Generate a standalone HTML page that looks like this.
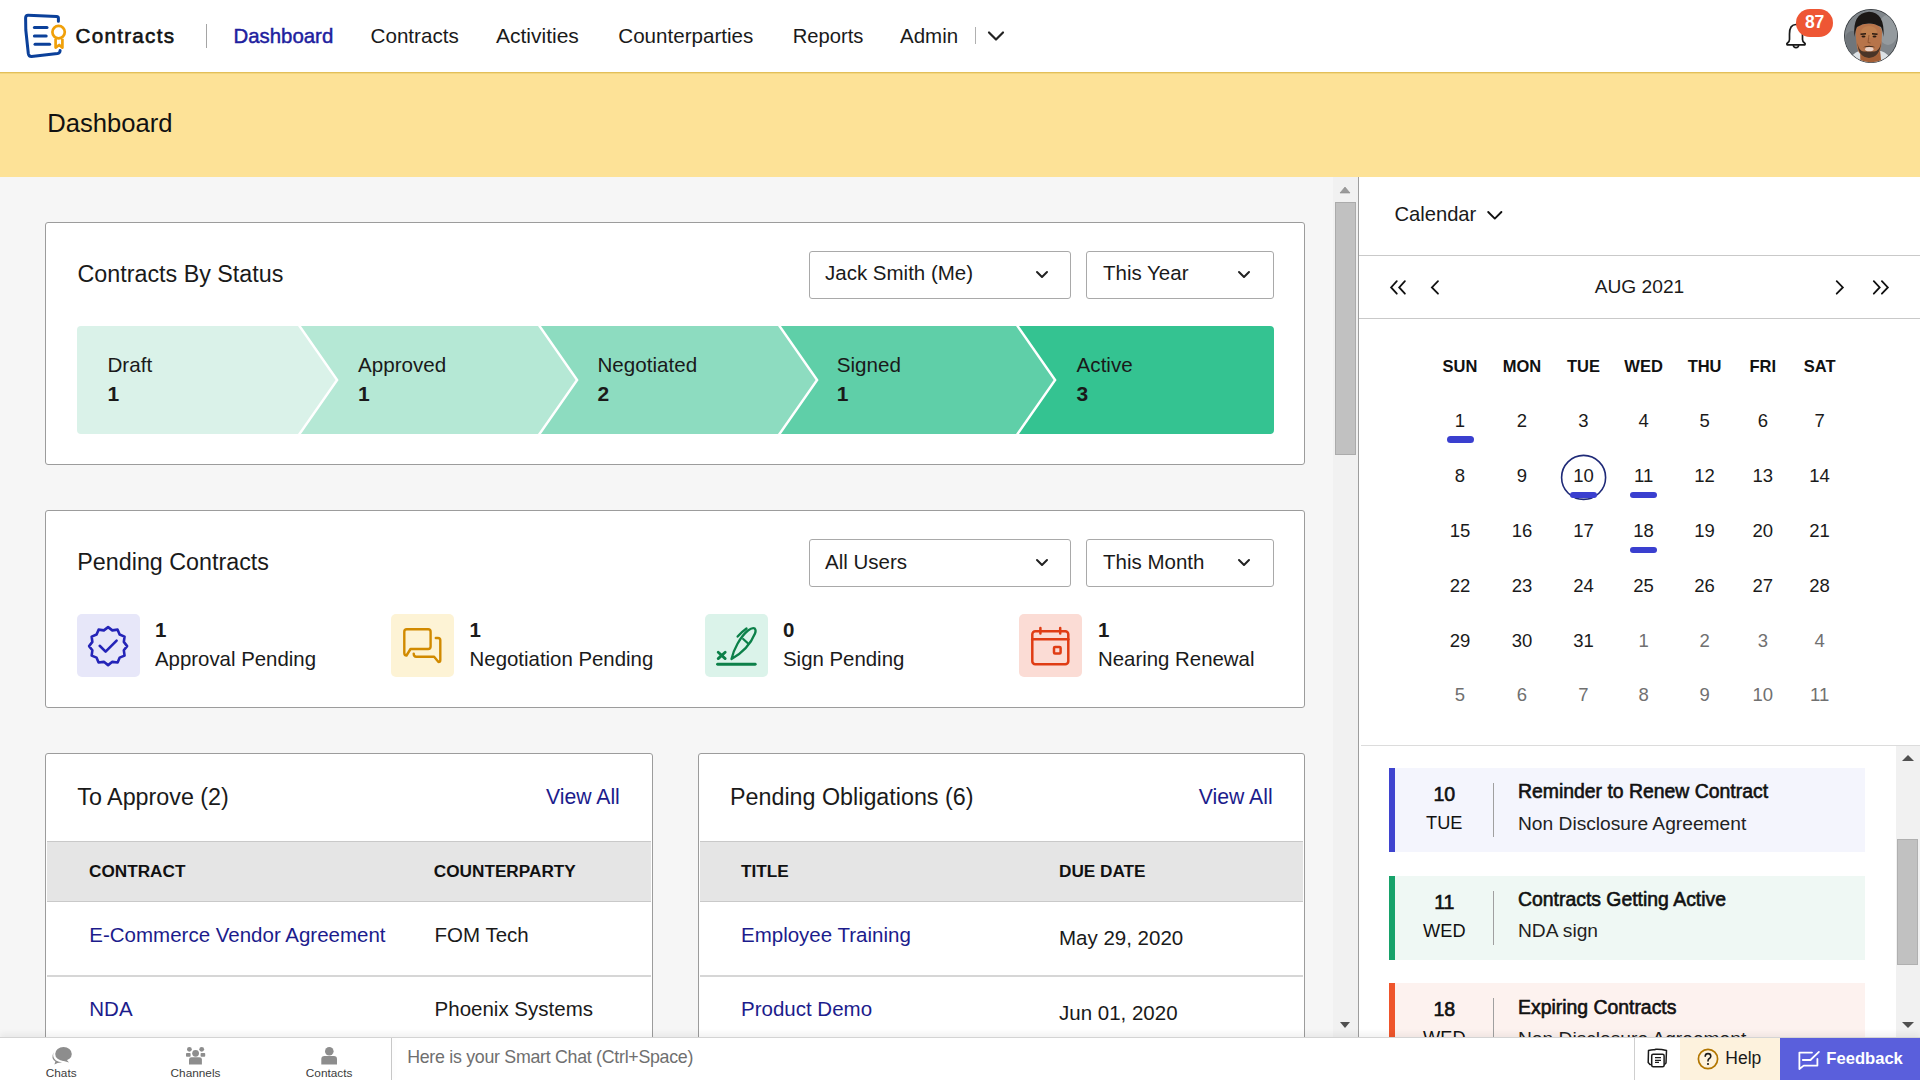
<!DOCTYPE html>
<html><head><meta charset="utf-8"><title>Contracts Dashboard</title>
<style>
html,body{margin:0;padding:0;width:1920px;height:1080px;overflow:hidden;background:#fff;}
body{position:relative;font-family:"Liberation Sans",sans-serif;}
.t{position:absolute;white-space:nowrap;}
.r{position:absolute;}
svg.r{overflow:visible;}
</style></head><body>
<div class="r" style="left:0px;top:0px;width:1920px;height:72px;background:#fff;"></div>
<div class="r" style="left:0px;top:72px;width:1920px;height:1px;background:#e3bf5a;"></div>
<div class="r" style="left:0px;top:73px;width:1920px;height:1px;background:#f3d67f;"></div>
<div class="r" style="left:0px;top:74px;width:1920px;height:103px;background:#fde297;"></div>
<div class="r" style="left:0px;top:177px;width:1333px;height:861px;background:#f6f6f6;"></div>
<div class="r" style="left:1333px;top:177px;width:25px;height:861px;background:#f1f1f1;"></div>
<div class="r" style="left:1335px;top:202px;width:21px;height:253px;background:#c1c1c1;border:1px solid #ababab;box-sizing:border-box;"></div>
<svg class="r" style="left:1338px;top:184px;" width="14" height="12" viewBox="0 0 14 12"><path d="M2 9 L7 3 L12 9 Z" fill="#9a9a9a" stroke="#8a8a8a" stroke-width="0.6"/></svg>
<svg class="r" style="left:1338px;top:1019px;" width="14" height="12" viewBox="0 0 14 12"><path d="M2 3 L7 9 L12 3 Z" fill="#505050"/></svg>
<div class="r" style="left:1358px;top:177px;width:562px;height:861px;background:#fff;border-left:1px solid #9e9e9e;box-sizing:border-box;"></div>
<svg class="r" style="left:20px;top:8px;" width="52" height="56" viewBox="0 0 52 56">
<g fill="none" stroke="#0b409a" stroke-width="3" stroke-linecap="round" stroke-linejoin="round">
<path d="M38.4 13.3 L38.4 10.3 Q38.4 8.7 36.6 8.6 L8.2 7.3 Q5.8 7.2 5.6 9.8 L5.8 22 L8.3 45.5 Q8.8 48.6 11.5 48.5 L37.5 45.6 Q40 45.2 40.1 42.5"/>
<path d="M14.4 19.4 L27 19.4"/><path d="M14.4 28 L26.2 28"/><path d="M15 36.3 L29.6 36.3"/>
</g>
<g fill="none" stroke="#f0a00a" stroke-width="2.7" stroke-linejoin="round">
<circle cx="38.6" cy="24.1" r="6.2"/>
<path d="M35.6 30.8 L35.6 39.6 L39.2 37 L42.4 39.6 L42.4 30.8"/>
</g></svg>
<div class="t" style="left:75.50px;top:25.76px;font-size:20.6px;line-height:20.6px;color:#121212;letter-spacing:1.3px;-webkit-text-stroke:0.6px #121212;">Contracts</div>
<div class="r" style="left:206px;top:24px;width:1px;height:24px;background:#a5a5a5;"></div>
<div class="t" style="left:233.50px;top:25.93px;font-size:20.4px;line-height:20.4px;color:#20209e;-webkit-text-stroke:0.45px #20209e;">Dashboard</div>
<div class="t" style="left:370.60px;top:25.76px;font-size:20.6px;line-height:20.6px;color:#1a1a1a;">Contracts</div>
<div class="t" style="left:496.00px;top:25.42px;font-size:21px;line-height:21px;color:#1a1a1a;">Activities</div>
<div class="t" style="left:618.30px;top:25.76px;font-size:20.6px;line-height:20.6px;color:#1a1a1a;">Counterparties</div>
<div class="t" style="left:792.70px;top:26.10px;font-size:20.2px;line-height:20.2px;color:#1a1a1a;">Reports</div>
<div class="t" style="left:900.00px;top:25.85px;font-size:20.5px;line-height:20.5px;color:#1a1a1a;">Admin</div>
<div class="r" style="left:975px;top:27px;width:1px;height:17px;background:#b0b0b0;"></div>
<svg class="r" style="left:986px;top:29px;" width="20" height="14" viewBox="0 0 20 14"><path d="M3 3.5 L10 10.5 L17 3.5" fill="none" stroke="#222" stroke-width="2.2" stroke-linecap="round" stroke-linejoin="round"/></svg>
<svg class="r" style="left:1783px;top:20px;" width="26" height="32" viewBox="0 0 26 32"><g fill="none" stroke="#1a1a1a" stroke-width="1.7" stroke-linejoin="round">
<path d="M13 4.5 C7.5 4.5 6.5 9.5 6.5 14 L6.5 19.5 Q6.5 21.5 4.5 23 Q3.3 24 4.2 24.8 L21.8 24.8 Q22.7 24 21.5 23 Q19.5 21.5 19.5 19.5 L19.5 14 C19.5 9.5 18.5 4.5 13 4.5 Z"/>
<path d="M10.3 25 Q10.5 27.7 13 27.7 Q15.5 27.7 15.7 25"/></g></svg>
<div class="r" style="left:1796px;top:9px;width:37px;height:28px;background:#ee5634;border-radius:14px;"></div>
<div class="t" style="left:1664.50px;width:300px;text-align:center;top:13.99px;font-size:17.5px;line-height:17.5px;color:#fff;font-weight:700;letter-spacing:-0.3px;">87</div>
<svg class="r" style="left:1843px;top:8px;" width="56" height="56" viewBox="0 0 56 56">
<defs><clipPath id="av"><circle cx="28" cy="28" r="26.2"/></clipPath></defs>
<circle cx="28" cy="28" r="27" fill="#2f3438"/>
<g clip-path="url(#av)">
<rect x="0" y="0" width="56" height="56" fill="#80868b"/>
<ellipse cx="45" cy="22" rx="10" ry="15" fill="#949a9e"/>
<ellipse cx="9" cy="36" rx="8" ry="13" fill="#70767b"/>
<path d="M4 56 Q8 46 16 43 L38 43 Q46 45 50 56 Z" fill="#dde2e6"/>
<path d="M17 42 L37 42 L38.5 56 L17.5 56 Z" fill="#a35f36"/>
<path d="M12.5 24 Q12.5 16 26 15.5 Q39.5 16 39 25 L38.5 36 Q37.5 49 26 50 Q14.5 49 13.5 36 Z" fill="#b7744a"/>
<ellipse cx="26" cy="24" rx="8" ry="6" fill="#c0804f"/>
<path d="M11.5 29 Q9 5 26 3.8 Q42 4 40.5 29 Q39.5 22 38 19 Q30 15 26 15.6 Q20 15.4 14 19 Q12.5 22 11.5 29 Z" fill="#1b1715"/>
<path d="M14.5 35 Q15 49 26 50 Q37 49 38 35 Q36 44 30.5 43.5 L21.5 43.5 Q16 44 14.5 35 Z" fill="#4a3427"/>
<path d="M20 39.2 Q26 36.2 32.5 39.2 Q26 38.2 20 39.2 Z" fill="#2e2018"/>
<ellipse cx="26.3" cy="41.2" rx="4.2" ry="2.1" fill="#e9d2c8"/>
<path d="M17.5 26.3 L23 25.8 M29 25.8 L34.5 26.3" stroke="#2a1a10" stroke-width="1.4"/>
<ellipse cx="20.5" cy="28.6" rx="2" ry="1" fill="#2a1a10"/><ellipse cx="31.5" cy="28.6" rx="2" ry="1" fill="#2a1a10"/>
<path d="M26 27 L25 34.5 L27.5 35" stroke="#8f5530" stroke-width="1" fill="none"/>
</g></svg>
<div class="t" style="left:47.30px;top:110.73px;font-size:25.6px;line-height:25.6px;color:#111;">Dashboard</div>
<div class="r" style="left:45px;top:222px;width:1260px;height:243px;background:#fff;border:1px solid #9c9c9c;border-radius:3px;box-sizing:border-box;"></div>
<div class="t" style="left:77.50px;top:262.68px;font-size:23.3px;line-height:23.3px;color:#1a1a1a;">Contracts By Status</div>
<div class="r" style="left:809px;top:251px;width:262px;height:48px;background:#fff;border:1px solid #a9a9a9;border-radius:3px;box-sizing:border-box;"></div>
<div class="t" style="left:825.00px;top:263.45px;font-size:20.5px;line-height:20.5px;color:#1a1a1a;">Jack Smith (Me)</div>
<svg class="r" style="left:1034px;top:268px;" width="16" height="14" viewBox="0 0 16 14"><path d="M3 4 L8 9 L13 4" fill="none" stroke="#222" stroke-width="2" stroke-linecap="round" stroke-linejoin="round"/></svg>
<div class="r" style="left:1086px;top:251px;width:188px;height:48px;background:#fff;border:1px solid #a9a9a9;border-radius:3px;box-sizing:border-box;"></div>
<div class="t" style="left:1103.00px;top:263.45px;font-size:20.5px;line-height:20.5px;color:#1a1a1a;">This Year</div>
<svg class="r" style="left:1236px;top:268px;" width="16" height="14" viewBox="0 0 16 14"><path d="M3 4 L8 9 L13 4" fill="none" stroke="#222" stroke-width="2" stroke-linecap="round" stroke-linejoin="round"/></svg>
<svg class="r" style="left:77px;top:326px;" width="1198" height="108" viewBox="0 0 1198 108"><path d="M4 0 L221 0 L258.6 54 L221 108 L4 108 Q0 108 0 104 L0 4 Q0 0 4 0 Z" fill="#daf2e9"/><path d="M224 0 L461 0 L498.6 54 L461 108 L224 108 L261.6 54 Z" fill="#b5e8d5"/><path d="M464 0 L701 0 L738.6 54 L701 108 L464 108 L501.6 54 Z" fill="#8ddcc0"/><path d="M704 0 L939 0 L976.6 54 L939 108 L704 108 L741.6 54 Z" fill="#5fcfa8"/><path d="M942 0 L1193 0 Q1197 0 1197 4 L1197 104 Q1197 108 1193 108 L942 108 L979.6 54 Z" fill="#34c391"/></svg>
<div class="t" style="left:107.50px;top:354.66px;font-size:20.6px;line-height:20.6px;color:#1a1a1a;">Draft</div>
<div class="t" style="left:107.50px;top:382.92px;font-size:21px;line-height:21px;color:#1a1a1a;font-weight:700;">1</div>
<div class="t" style="left:358.00px;top:354.66px;font-size:20.6px;line-height:20.6px;color:#1a1a1a;">Approved</div>
<div class="t" style="left:358.00px;top:382.92px;font-size:21px;line-height:21px;color:#1a1a1a;font-weight:700;">1</div>
<div class="t" style="left:597.50px;top:354.66px;font-size:20.6px;line-height:20.6px;color:#1a1a1a;">Negotiated</div>
<div class="t" style="left:597.50px;top:382.92px;font-size:21px;line-height:21px;color:#1a1a1a;font-weight:700;">2</div>
<div class="t" style="left:836.80px;top:354.66px;font-size:20.6px;line-height:20.6px;color:#1a1a1a;">Signed</div>
<div class="t" style="left:836.80px;top:382.92px;font-size:21px;line-height:21px;color:#1a1a1a;font-weight:700;">1</div>
<div class="t" style="left:1076.60px;top:354.66px;font-size:20.6px;line-height:20.6px;color:#1a1a1a;">Active</div>
<div class="t" style="left:1076.60px;top:382.92px;font-size:21px;line-height:21px;color:#1a1a1a;font-weight:700;">3</div>
<div class="r" style="left:45px;top:510px;width:1260px;height:198px;background:#fff;border:1px solid #9c9c9c;border-radius:3px;box-sizing:border-box;"></div>
<div class="t" style="left:77.30px;top:550.98px;font-size:23.3px;line-height:23.3px;color:#1a1a1a;">Pending Contracts</div>
<div class="r" style="left:809px;top:539px;width:262px;height:48px;background:#fff;border:1px solid #a9a9a9;border-radius:3px;box-sizing:border-box;"></div>
<div class="t" style="left:825.00px;top:551.75px;font-size:20.5px;line-height:20.5px;color:#1a1a1a;">All Users</div>
<svg class="r" style="left:1034px;top:556px;" width="16" height="14" viewBox="0 0 16 14"><path d="M3 4 L8 9 L13 4" fill="none" stroke="#222" stroke-width="2" stroke-linecap="round" stroke-linejoin="round"/></svg>
<div class="r" style="left:1086px;top:539px;width:188px;height:48px;background:#fff;border:1px solid #a9a9a9;border-radius:3px;box-sizing:border-box;"></div>
<div class="t" style="left:1103.00px;top:551.75px;font-size:20.5px;line-height:20.5px;color:#1a1a1a;">This Month</div>
<svg class="r" style="left:1236px;top:556px;" width="16" height="14" viewBox="0 0 16 14"><path d="M3 4 L8 9 L13 4" fill="none" stroke="#222" stroke-width="2" stroke-linecap="round" stroke-linejoin="round"/></svg>
<div class="r" style="left:77px;top:614px;width:63px;height:63px;background:#e7e7f9;border-radius:5px;"></div>
<svg class="r" style="left:77px;top:614px;" width="63" height="63" viewBox="0 0 63 63"><g fill="none" stroke="#2424b8" stroke-width="2.6" stroke-linejoin="round" stroke-linecap="round">
 <path d="M31.10 13.10 L35.32 16.36 L40.60 15.65 L42.63 20.57 L47.55 22.60 L46.84 27.88 L50.10 32.10 L46.84 36.32 L47.55 41.60 L42.63 43.63 L40.60 48.55 L35.32 47.84 L31.10 51.10 L26.88 47.84 L21.60 48.55 L19.57 43.63 L14.65 41.60 L15.36 36.32 L12.10 32.10 L15.36 27.88 L14.65 22.60 L19.57 20.57 L21.60 15.65 L26.88 16.36 Z"/><path d="M22.7 31.8 L28.6 37.6 L39.6 26.6"/></g></svg>
<div class="t" style="left:155.00px;top:619.75px;font-size:20.5px;line-height:20.5px;color:#1a1a1a;font-weight:700;">1</div>
<div class="t" style="left:155.00px;top:649.13px;font-size:20.4px;line-height:20.4px;color:#1a1a1a;">Approval Pending</div>
<div class="r" style="left:391px;top:614px;width:63px;height:63px;background:#fdf3d5;border-radius:5px;"></div>
<svg class="r" style="left:391px;top:614px;" width="63" height="63" viewBox="0 0 63 63"><g fill="none" stroke="#d18a00" stroke-width="2.4" stroke-linejoin="round" stroke-linecap="round">
 <path d="M15.5 41.5 Q13.3 41.5 13.3 39 L13.3 17.8 Q13.3 15.3 15.8 15.3 L37.1 15.3 Q39.6 15.3 39.6 17.8 L39.6 32.5 Q39.6 35 37.1 35 L19.5 35 Z"/>
 <path d="M44.8 24 L47 24 Q49.3 24 49.3 26.3 L49.3 46 Q49.3 48 47.5 48 L43.1 42.8 L25.2 42.8 Q22.7 42.8 22.7 39.6"/></g></svg>
<div class="t" style="left:469.60px;top:619.75px;font-size:20.5px;line-height:20.5px;color:#1a1a1a;font-weight:700;">1</div>
<div class="t" style="left:469.60px;top:649.13px;font-size:20.4px;line-height:20.4px;color:#1a1a1a;">Negotiation Pending</div>
<div class="r" style="left:705px;top:614px;width:63px;height:63px;background:#dbf3ea;border-radius:5px;"></div>
<svg class="r" style="left:705px;top:614px;" width="63" height="63" viewBox="0 0 63 63"><g fill="none" stroke="#0c8049" stroke-width="2.6" stroke-linecap="round" stroke-linejoin="round">
 <path d="M12.6 50.3 L50.2 50.3" stroke-width="2.9"/><path d="M13.2 38.2 L20.2 44.6 M20.2 38.2 L13.2 44.6" stroke-width="2.8"/>
 <path d="M26.5 45 C28.5 36 35 23 43 16.5 Q47.5 13.2 49.8 14.6 Q51.3 16.5 50 19.5 C46.5 28 39 38 26.5 45 Z" stroke-width="2.3"/>
 <path d="M32.6 22.6 Q37 17.6 41.5 14.5" stroke-width="2.3"/><path d="M38.2 25 L42.6 29" stroke-width="2.3"/></g></svg>
<div class="t" style="left:783.00px;top:619.75px;font-size:20.5px;line-height:20.5px;color:#1a1a1a;font-weight:700;">0</div>
<div class="t" style="left:783.00px;top:649.13px;font-size:20.4px;line-height:20.4px;color:#1a1a1a;">Sign Pending</div>
<div class="r" style="left:1019px;top:614px;width:63px;height:63px;background:#fbdcd5;border-radius:5px;"></div>
<svg class="r" style="left:1019px;top:614px;" width="63" height="63" viewBox="0 0 63 63"><g fill="none" stroke="#e03c14" stroke-width="2.5" stroke-linecap="round" stroke-linejoin="round">
 <rect x="13.3" y="17.2" width="36" height="33.1" rx="3"/><path d="M13.3 25.3 L49.3 25.3"/>
 <path d="M21.4 14 L21.4 19.6 M41.2 14 L41.2 19.6"/><rect x="35" y="33" width="6.6" height="6.6" rx="1"/></g></svg>
<div class="t" style="left:1098.00px;top:619.75px;font-size:20.5px;line-height:20.5px;color:#1a1a1a;font-weight:700;">1</div>
<div class="t" style="left:1098.00px;top:649.13px;font-size:20.4px;line-height:20.4px;color:#1a1a1a;">Nearing Renewal</div>
<div class="r" style="left:45px;top:753px;width:608px;height:400px;background:#fff;border:1px solid #9c9c9c;border-radius:3px;box-sizing:border-box;"></div>
<div class="t" style="left:77.30px;top:786.18px;font-size:23.3px;line-height:23.3px;color:#1a1a1a;">To Approve (2)</div>
<div class="t" style="left:546.00px;top:786.15px;font-size:21.2px;line-height:21.2px;color:#1c1c8c;">View All</div>
<div class="r" style="left:47px;top:841px;width:604px;height:61px;background:#e5e5e5;border-top:1px solid #c9c9c9;border-bottom:1px solid #c9c9c9;box-sizing:border-box;"></div>
<div class="t" style="left:89.00px;top:863.24px;font-size:17.2px;line-height:17.2px;color:#111;font-weight:700;">CONTRACT</div>
<div class="t" style="left:433.80px;top:863.24px;font-size:17.2px;line-height:17.2px;color:#111;font-weight:700;">COUNTERPARTY</div>
<div class="r" style="left:47px;top:975px;width:604px;height:2px;background:#d6d6d6;"></div>
<div class="t" style="left:89.30px;top:925.05px;font-size:20.5px;line-height:20.5px;color:#1c1c8c;">E-Commerce Vendor Agreement</div>
<div class="t" style="left:434.60px;top:925.05px;font-size:20.5px;line-height:20.5px;color:#1a1a1a;">FOM Tech</div>
<div class="t" style="left:89.30px;top:998.95px;font-size:20.5px;line-height:20.5px;color:#1c1c8c;">NDA</div>
<div class="t" style="left:434.60px;top:998.95px;font-size:20.5px;line-height:20.5px;color:#1a1a1a;">Phoenix Systems</div>
<div class="r" style="left:698px;top:753px;width:607px;height:400px;background:#fff;border:1px solid #9c9c9c;border-radius:3px;box-sizing:border-box;"></div>
<div class="t" style="left:730.00px;top:786.18px;font-size:23.3px;line-height:23.3px;color:#1a1a1a;">Pending Obligations (6)</div>
<div class="t" style="left:1198.80px;top:786.15px;font-size:21.2px;line-height:21.2px;color:#1c1c8c;">View All</div>
<div class="r" style="left:700px;top:841px;width:603px;height:61px;background:#e5e5e5;border-top:1px solid #c9c9c9;border-bottom:1px solid #c9c9c9;box-sizing:border-box;"></div>
<div class="t" style="left:741.00px;top:863.24px;font-size:17.2px;line-height:17.2px;color:#111;font-weight:700;">TITLE</div>
<div class="t" style="left:1059.00px;top:863.24px;font-size:17.2px;line-height:17.2px;color:#111;font-weight:700;">DUE DATE</div>
<div class="r" style="left:700px;top:975px;width:603px;height:2px;background:#d6d6d6;"></div>
<div class="t" style="left:741.00px;top:924.55px;font-size:20.5px;line-height:20.5px;color:#1c1c8c;">Employee Training</div>
<div class="t" style="left:1059.00px;top:928.15px;font-size:20.5px;line-height:20.5px;color:#1a1a1a;">May 29, 2020</div>
<div class="t" style="left:741.00px;top:999.35px;font-size:20.5px;line-height:20.5px;color:#1c1c8c;">Product Demo</div>
<div class="t" style="left:1059.00px;top:1002.95px;font-size:20.5px;line-height:20.5px;color:#1a1a1a;">Jun 01, 2020</div>
<div class="t" style="left:1394.40px;top:203.60px;font-size:20.2px;line-height:20.2px;color:#1a1a1a;">Calendar</div>
<svg class="r" style="left:1484px;top:207px;" width="20" height="18" viewBox="0 0 20 18"><path d="M4.2 5 L10.8 11.6 L17.4 5" fill="none" stroke="#111" stroke-width="1.9" stroke-linecap="round" stroke-linejoin="round"/></svg>
<div class="r" style="left:1359px;top:255px;width:561px;height:1px;background:#c9c9c9;"></div>
<svg class="r" style="left:1386px;top:276px;" width="60" height="22" viewBox="0 0 60 22"><g fill="none" stroke="#111" stroke-width="1.8" stroke-linecap="round" stroke-linejoin="miter">
<path d="M10.8 5.1 L5.1 11.4 L10.8 17.7"/><path d="M18.9 5.1 L13.2 11.4 L18.9 17.7"/><path d="M52 5.1 L45.9 11.4 L52 17.7"/></g></svg>
<svg class="r" style="left:1830px;top:276px;" width="62" height="22" viewBox="0 0 62 22"><g fill="none" stroke="#111" stroke-width="1.8" stroke-linecap="round" stroke-linejoin="miter">
<path d="M6.7 5.1 L12.85 11.4 L6.7 17.7"/><path d="M43.8 5.1 L49.7 11.4 L43.8 17.7"/><path d="M51.9 5.1 L57.85 11.4 L51.9 17.7"/></g></svg>
<div class="t" style="left:1594.70px;top:277.25px;font-size:19.2px;line-height:19.2px;color:#1a1a1a;">AUG 2021</div>
<div class="r" style="left:1359px;top:318px;width:561px;height:1px;background:#c9c9c9;"></div>
<div class="t" style="left:1310.00px;width:300px;text-align:center;top:358.33px;font-size:16.5px;line-height:16.5px;color:#111;font-weight:700;">SUN</div>
<div class="t" style="left:1372.00px;width:300px;text-align:center;top:358.33px;font-size:16.5px;line-height:16.5px;color:#111;font-weight:700;">MON</div>
<div class="t" style="left:1433.50px;width:300px;text-align:center;top:358.33px;font-size:16.5px;line-height:16.5px;color:#111;font-weight:700;">TUE</div>
<div class="t" style="left:1493.60px;width:300px;text-align:center;top:358.33px;font-size:16.5px;line-height:16.5px;color:#111;font-weight:700;">WED</div>
<div class="t" style="left:1554.60px;width:300px;text-align:center;top:358.33px;font-size:16.5px;line-height:16.5px;color:#111;font-weight:700;">THU</div>
<div class="t" style="left:1612.80px;width:300px;text-align:center;top:358.33px;font-size:16.5px;line-height:16.5px;color:#111;font-weight:700;">FRI</div>
<div class="t" style="left:1669.60px;width:300px;text-align:center;top:358.33px;font-size:16.5px;line-height:16.5px;color:#111;font-weight:700;">SAT</div>
<div class="t" style="left:1310.00px;width:300px;text-align:center;top:411.64px;font-size:18.5px;line-height:18.5px;color:#1a1a1a;">1</div>
<div class="t" style="left:1372.00px;width:300px;text-align:center;top:411.64px;font-size:18.5px;line-height:18.5px;color:#1a1a1a;">2</div>
<div class="t" style="left:1433.50px;width:300px;text-align:center;top:411.64px;font-size:18.5px;line-height:18.5px;color:#1a1a1a;">3</div>
<div class="t" style="left:1493.60px;width:300px;text-align:center;top:411.64px;font-size:18.5px;line-height:18.5px;color:#1a1a1a;">4</div>
<div class="t" style="left:1554.60px;width:300px;text-align:center;top:411.64px;font-size:18.5px;line-height:18.5px;color:#1a1a1a;">5</div>
<div class="t" style="left:1612.80px;width:300px;text-align:center;top:411.64px;font-size:18.5px;line-height:18.5px;color:#1a1a1a;">6</div>
<div class="t" style="left:1669.60px;width:300px;text-align:center;top:411.64px;font-size:18.5px;line-height:18.5px;color:#1a1a1a;">7</div>
<div class="t" style="left:1310.00px;width:300px;text-align:center;top:467.14px;font-size:18.5px;line-height:18.5px;color:#1a1a1a;">8</div>
<div class="t" style="left:1372.00px;width:300px;text-align:center;top:467.14px;font-size:18.5px;line-height:18.5px;color:#1a1a1a;">9</div>
<div class="t" style="left:1433.50px;width:300px;text-align:center;top:467.14px;font-size:18.5px;line-height:18.5px;color:#1a1a1a;">10</div>
<div class="t" style="left:1493.60px;width:300px;text-align:center;top:467.14px;font-size:18.5px;line-height:18.5px;color:#1a1a1a;">11</div>
<div class="t" style="left:1554.60px;width:300px;text-align:center;top:467.14px;font-size:18.5px;line-height:18.5px;color:#1a1a1a;">12</div>
<div class="t" style="left:1612.80px;width:300px;text-align:center;top:467.14px;font-size:18.5px;line-height:18.5px;color:#1a1a1a;">13</div>
<div class="t" style="left:1669.60px;width:300px;text-align:center;top:467.14px;font-size:18.5px;line-height:18.5px;color:#1a1a1a;">14</div>
<div class="t" style="left:1310.00px;width:300px;text-align:center;top:522.14px;font-size:18.5px;line-height:18.5px;color:#1a1a1a;">15</div>
<div class="t" style="left:1372.00px;width:300px;text-align:center;top:522.14px;font-size:18.5px;line-height:18.5px;color:#1a1a1a;">16</div>
<div class="t" style="left:1433.50px;width:300px;text-align:center;top:522.14px;font-size:18.5px;line-height:18.5px;color:#1a1a1a;">17</div>
<div class="t" style="left:1493.60px;width:300px;text-align:center;top:522.14px;font-size:18.5px;line-height:18.5px;color:#1a1a1a;">18</div>
<div class="t" style="left:1554.60px;width:300px;text-align:center;top:522.14px;font-size:18.5px;line-height:18.5px;color:#1a1a1a;">19</div>
<div class="t" style="left:1612.80px;width:300px;text-align:center;top:522.14px;font-size:18.5px;line-height:18.5px;color:#1a1a1a;">20</div>
<div class="t" style="left:1669.60px;width:300px;text-align:center;top:522.14px;font-size:18.5px;line-height:18.5px;color:#1a1a1a;">21</div>
<div class="t" style="left:1310.00px;width:300px;text-align:center;top:576.84px;font-size:18.5px;line-height:18.5px;color:#1a1a1a;">22</div>
<div class="t" style="left:1372.00px;width:300px;text-align:center;top:576.84px;font-size:18.5px;line-height:18.5px;color:#1a1a1a;">23</div>
<div class="t" style="left:1433.50px;width:300px;text-align:center;top:576.84px;font-size:18.5px;line-height:18.5px;color:#1a1a1a;">24</div>
<div class="t" style="left:1493.60px;width:300px;text-align:center;top:576.84px;font-size:18.5px;line-height:18.5px;color:#1a1a1a;">25</div>
<div class="t" style="left:1554.60px;width:300px;text-align:center;top:576.84px;font-size:18.5px;line-height:18.5px;color:#1a1a1a;">26</div>
<div class="t" style="left:1612.80px;width:300px;text-align:center;top:576.84px;font-size:18.5px;line-height:18.5px;color:#1a1a1a;">27</div>
<div class="t" style="left:1669.60px;width:300px;text-align:center;top:576.84px;font-size:18.5px;line-height:18.5px;color:#1a1a1a;">28</div>
<div class="t" style="left:1310.00px;width:300px;text-align:center;top:631.84px;font-size:18.5px;line-height:18.5px;color:#1a1a1a;">29</div>
<div class="t" style="left:1372.00px;width:300px;text-align:center;top:631.84px;font-size:18.5px;line-height:18.5px;color:#1a1a1a;">30</div>
<div class="t" style="left:1433.50px;width:300px;text-align:center;top:631.84px;font-size:18.5px;line-height:18.5px;color:#1a1a1a;">31</div>
<div class="t" style="left:1493.60px;width:300px;text-align:center;top:631.84px;font-size:18.5px;line-height:18.5px;color:#707070;">1</div>
<div class="t" style="left:1554.60px;width:300px;text-align:center;top:631.84px;font-size:18.5px;line-height:18.5px;color:#707070;">2</div>
<div class="t" style="left:1612.80px;width:300px;text-align:center;top:631.84px;font-size:18.5px;line-height:18.5px;color:#707070;">3</div>
<div class="t" style="left:1669.60px;width:300px;text-align:center;top:631.84px;font-size:18.5px;line-height:18.5px;color:#707070;">4</div>
<div class="t" style="left:1310.00px;width:300px;text-align:center;top:686.34px;font-size:18.5px;line-height:18.5px;color:#707070;">5</div>
<div class="t" style="left:1372.00px;width:300px;text-align:center;top:686.34px;font-size:18.5px;line-height:18.5px;color:#707070;">6</div>
<div class="t" style="left:1433.50px;width:300px;text-align:center;top:686.34px;font-size:18.5px;line-height:18.5px;color:#707070;">7</div>
<div class="t" style="left:1493.60px;width:300px;text-align:center;top:686.34px;font-size:18.5px;line-height:18.5px;color:#707070;">8</div>
<div class="t" style="left:1554.60px;width:300px;text-align:center;top:686.34px;font-size:18.5px;line-height:18.5px;color:#707070;">9</div>
<div class="t" style="left:1612.80px;width:300px;text-align:center;top:686.34px;font-size:18.5px;line-height:18.5px;color:#707070;">10</div>
<div class="t" style="left:1669.60px;width:300px;text-align:center;top:686.34px;font-size:18.5px;line-height:18.5px;color:#707070;">11</div>
<svg class="r" style="left:1559px;top:453px;" width="50" height="50" viewBox="0 0 50 50"><circle cx="24.6" cy="24.4" r="22" fill="none" stroke="#1f2a78" stroke-width="1.6"/></svg>
<div class="r" style="left:1446.5px;top:436.3px;width:27px;height:6.5px;background:#3a3fcf;border-radius:3.5px;"></div>
<div class="r" style="left:1570.0px;top:491.8px;width:27px;height:6.5px;background:#3a3fcf;border-radius:3.5px;"></div>
<div class="r" style="left:1630.1px;top:491.8px;width:27px;height:6.5px;background:#3a3fcf;border-radius:3.5px;"></div>
<div class="r" style="left:1630.1px;top:546.8px;width:27px;height:6.5px;background:#3a3fcf;border-radius:3.5px;"></div>
<div class="r" style="left:1361px;top:745px;width:559px;height:1px;background:#dcdcdc;"></div>
<div class="r" style="left:1896px;top:746px;width:24px;height:292px;background:#f1f1f1;"></div>
<div class="r" style="left:1897px;top:839px;width:21px;height:126px;background:#c1c1c1;border:1px solid #b0b0b0;box-sizing:border-box;"></div>
<svg class="r" style="left:1900px;top:752px;" width="16" height="12" viewBox="0 0 16 12"><path d="M2 9 L8 3 L14 9 Z" fill="#505050"/></svg>
<svg class="r" style="left:1900px;top:1019px;" width="16" height="12" viewBox="0 0 16 12"><path d="M2 3 L8 9 L14 3 Z" fill="#505050"/></svg>
<div class="r" style="left:1389px;top:768px;width:476px;height:84px;background:#f4f5fd;"></div>
<div class="r" style="left:1389px;top:768px;width:6px;height:84px;background:#3f44cf;"></div>
<div class="r" style="left:1493px;top:783px;width:1px;height:54px;background:#a0a0a0;"></div>
<div class="t" style="left:1294.30px;width:300px;text-align:center;top:784.91px;font-size:19.6px;line-height:19.6px;color:#111;-webkit-text-stroke:0.6px #111;">10</div>
<div class="t" style="left:1294.30px;width:300px;text-align:center;top:813.89px;font-size:18.2px;line-height:18.2px;color:#111;">TUE</div>
<div class="t" style="left:1518.00px;top:782.38px;font-size:19.4px;line-height:19.4px;color:#111;-webkit-text-stroke:0.6px #111;">Reminder to Renew Contract</div>
<div class="t" style="left:1518.00px;top:813.55px;font-size:19.2px;line-height:19.2px;color:#222;">Non Disclosure Agreement</div>
<div class="r" style="left:1389px;top:876px;width:476px;height:84px;background:#eff8f4;"></div>
<div class="r" style="left:1389px;top:876px;width:6px;height:84px;background:#17a26a;"></div>
<div class="r" style="left:1493px;top:891px;width:1px;height:54px;background:#a0a0a0;"></div>
<div class="t" style="left:1294.30px;width:300px;text-align:center;top:892.71px;font-size:19.6px;line-height:19.6px;color:#111;-webkit-text-stroke:0.6px #111;">11</div>
<div class="t" style="left:1294.30px;width:300px;text-align:center;top:921.69px;font-size:18.2px;line-height:18.2px;color:#111;">WED</div>
<div class="t" style="left:1518.00px;top:890.18px;font-size:19.4px;line-height:19.4px;color:#111;-webkit-text-stroke:0.6px #111;">Contracts Getting Active</div>
<div class="t" style="left:1518.00px;top:921.35px;font-size:19.2px;line-height:19.2px;color:#222;">NDA sign</div>
<div class="r" style="left:1389px;top:983px;width:476px;height:84px;background:#fdf2ef;"></div>
<div class="r" style="left:1389px;top:983px;width:6px;height:84px;background:#ef552b;"></div>
<div class="r" style="left:1493px;top:998px;width:1px;height:54px;background:#a0a0a0;"></div>
<div class="t" style="left:1294.30px;width:300px;text-align:center;top:1000.41px;font-size:19.6px;line-height:19.6px;color:#111;-webkit-text-stroke:0.6px #111;">18</div>
<div class="t" style="left:1294.30px;width:300px;text-align:center;top:1029.39px;font-size:18.2px;line-height:18.2px;color:#111;">WED</div>
<div class="t" style="left:1518.00px;top:997.88px;font-size:19.4px;line-height:19.4px;color:#111;-webkit-text-stroke:0.6px #111;">Expiring Contracts</div>
<div class="t" style="left:1518.00px;top:1029.05px;font-size:19.2px;line-height:19.2px;color:#222;">Non Disclosure Agreement</div>
<div class="r" style="left:0px;top:1037px;width:1920px;height:43px;background:#fff;border-top:1px solid #d4d4d4;box-sizing:border-box;box-shadow:0 -4px 6px rgba(0,0,0,0.05);"></div>
<svg class="r" style="left:40px;top:1040px;" width="40" height="30" viewBox="0 0 40 30"><g fill="#8d8d8d">
<ellipse cx="23.5" cy="13.9" rx="8.3" ry="7"/><path d="M26 19 L29 22.4 L22 20.5 Z"/>
<path d="M13.7 12.2 Q12 17 16 20.5 Q19 22.3 22.2 22.2 Q17 22.6 14.4 24.6 L15.4 21.6 Q10.5 18 13.7 12.2 Z"/></g></svg>
<svg class="r" style="left:180px;top:1040px;" width="30" height="30" viewBox="0 0 30 30"><g fill="#8d8d8d">
<circle cx="15.6" cy="13.3" r="3.4"/><circle cx="9.4" cy="9.3" r="2.4"/><circle cx="21.7" cy="9.3" r="2.4"/>
<rect x="6" y="13" width="4.6" height="3.8" rx="0.8"/><rect x="20.6" y="13" width="4.6" height="3.8" rx="0.8"/>
<path d="M9 24.6 L9 19.5 Q9 17.2 11.5 17.2 L19.4 17.2 Q21.9 17.2 21.9 19.5 L21.9 24.6 Z"/></g></svg>
<svg class="r" style="left:310px;top:1040px;" width="40" height="30" viewBox="0 0 40 30"><g fill="#8d8d8d">
<circle cx="19.3" cy="11.3" r="4.3"/><path d="M11.3 24.6 L11.3 19 Q11.3 15.9 14.5 15.9 L23.8 15.9 Q27 15.9 27 19 L27 24.6 Z"/></g></svg>
<div class="t" style="left:-88.80px;width:300px;text-align:center;top:1067.71px;font-size:11.8px;line-height:11.8px;color:#3c3c3c;">Chats</div>
<div class="t" style="left:45.50px;width:300px;text-align:center;top:1067.71px;font-size:11.8px;line-height:11.8px;color:#3c3c3c;">Channels</div>
<div class="t" style="left:179.10px;width:300px;text-align:center;top:1067.71px;font-size:11.8px;line-height:11.8px;color:#3c3c3c;">Contacts</div>
<div class="r" style="left:391px;top:1038px;width:1px;height:42px;background:#c8c8c8;box-shadow:2px 0 4px rgba(0,0,0,0.06);"></div>
<div class="t" style="left:407.20px;top:1049.33px;font-size:17.8px;line-height:17.8px;color:#6f6f6f;letter-spacing:-0.28px;">Here is your Smart Chat (Ctrl+Space)</div>
<div class="r" style="left:1634px;top:1038px;width:1px;height:42px;background:#cfcfcf;"></div>
<svg class="r" style="left:1644px;top:1046px;" width="28" height="24" viewBox="0 0 28 24"><g fill="#fff" stroke="#1a1a1a" stroke-width="1.5" stroke-linejoin="round">
<path d="M4.5 4.5 Q8 3.5 10.5 3.8 L12 3.2 Q17 3 22.5 4.5 L22 17 L20 19 L6 18.5 L4.2 16.5 Z"/>
<rect x="7.7" y="8.3" width="12.4" height="12.4" rx="1.5"/>
<path d="M11 11.6 L17 11.6 M11 14.4 L17 14.4 M11 16.4 L15 16.4" stroke-width="1.3"/></g></svg>
<div class="r" style="left:1680px;top:1038px;width:100px;height:42px;background:#fdf2dd;"></div>
<svg class="r" style="left:1696px;top:1047px;" width="24" height="24" viewBox="0 0 24 24"><circle cx="12" cy="12" r="9.6" fill="none" stroke="#b27600" stroke-width="1.7"/>
<path d="M9.2 9.3 Q9.3 6.6 12 6.6 Q14.8 6.6 14.8 9.2 Q14.8 10.8 13 11.8 Q12 12.4 12 14" fill="none" stroke="#1a1a1a" stroke-width="1.6" stroke-linecap="round"/>
<circle cx="12" cy="17" r="1.1" fill="#1a1a1a"/></svg>
<div class="t" style="left:1725.30px;top:1049.69px;font-size:17.5px;line-height:17.5px;color:#1a1a1a;">Help</div>
<div class="r" style="left:1780px;top:1038px;width:140px;height:42px;background:#5a5fdc;"></div>
<svg class="r" style="left:1796px;top:1048px;" width="26" height="24" viewBox="0 0 26 24"><g fill="none" stroke="#fff" stroke-width="1.8" stroke-linejoin="round" stroke-linecap="round">
<path d="M16 4.6 L3.4 4.6 L3.4 21 L7.7 17.6 L21.4 17.6 L21.4 11"/><path d="M6.8 12 L14.4 12"/><path d="M14.4 12 L22.9 3.9"/></g></svg>
<div class="t" style="left:1826.30px;top:1051.05px;font-size:16.6px;line-height:16.6px;color:#fff;font-weight:700;">Feedback</div>
</body></html>
